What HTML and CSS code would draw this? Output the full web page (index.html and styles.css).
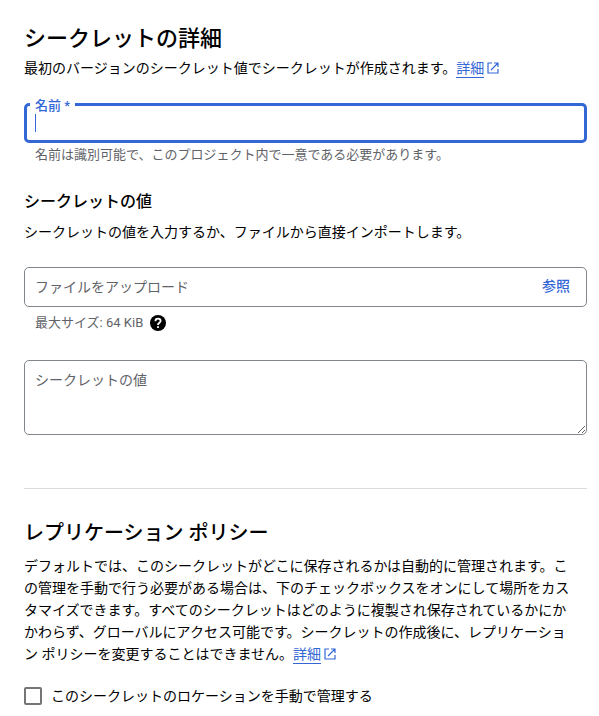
FILE: index.html
```html
<!DOCTYPE html>
<html lang="ja">
<head>
  <meta charset="UTF-8" />
  <meta name="viewport" content="width=device-width, initial-scale=1.0" />
  <title>シークレットの作成</title>
  <link rel="stylesheet" href="styles.css">
</head>
<body>
  <form class="secret-form">
    <section class="details" id="details">
      <h1>シークレットの詳細</h1>
      <p>最初のバージョンのシークレット値でシークレットが作成されます。<a href="#details" class="more"><span>詳細</span><svg viewBox="0 0 14 14" aria-hidden="true"><path d="M6 2H2v10h10V8M8 2h4v4M12 2L5 9" /></svg></a></p>

      <div class="name-field">
        <label for="name">名前 *</label>
        <input type="text" id="name" required>
        <span class="caret"></span>
      </div>
      <div class="hint">名前は識別可能で、このプロジェクト内で一意である必要があります。</div>

      <h3>シークレットの値</h3>
      <p>シークレットの値を入力するか、ファイルから直接インポートします。</p>

      <div class="upload">
        <input type="text" placeholder="ファイルをアップロード" aria-label="ファイルをアップロード" readonly>
        <button type="button">参照</button>
      </div>
      <div class="hint size-hint">
        <span>最大サイズ: 64 KiB</span>
        <svg viewBox="0 0 16 16" aria-hidden="true">
          <circle cx="8" cy="8" r="8" />
          <path d="M5.4 6.2C5.4 4.7 6.5 3.7 8 3.7S10.6 4.7 10.6 6.1C10.6 7.8 8 7.9 8 9.9" />
          <rect x="7.1" y="11.2" width="1.8" height="1.8" />
        </svg>
      </div>

      <textarea placeholder="シークレットの値" aria-label="シークレットの値"></textarea>
    </section>

    <section class="replication" id="replication">
      <h2>レプリケーション ポリシー</h2>
      <p>デフォルトでは、このシークレットがどこに保存されるかは自動的に管理されます。この管理を手動で行う必要がある場合は、下のチェックボックスをオンにして場所をカスタマイズできます。すべてのシークレットはどのように複製され保存されているかにかかわらず、グローバルにアクセス可能です。シークレットの作成後に、レプリケーション ポリシーを変更することはできません。<a href="#replication" class="more"><span>詳細</span><svg viewBox="0 0 14 14" aria-hidden="true"><path d="M6 2H2v10h10V8M8 2h4v4M12 2L5 9" /></svg></a></p>

      <div class="check">
        <input type="checkbox" id="manual">
        <label for="manual">このシークレットのロケーションを手動で管理する</label>
      </div>
    </section>
  </form>
</body>
</html>
```
FILE: styles.css
```css
* {
  box-sizing: border-box;
}
body {
  margin: 0;
  background: #fff;
  color: #000;
  font-family: Roboto, "Noto Sans CJK JP", sans-serif;
  font-size: 14px;
  line-height: 22px;
}
.secret-form {
  padding: 25px 12px 8px 24px;
}
h1, h2, h3, p {
  margin: 0;
}
h1, h2, h3 {
  font-weight: 500;
}
h1 {
  font-size: 22px;
  line-height: 28px;
  margin-bottom: 4px;
}
h2 {
  font-size: 20px;
  line-height: 28px;
  margin-bottom: 8px;
}
h3 {
  font-size: 16px;
  line-height: 24px;
  margin: 25px 0 7px;
}
input, textarea, button {
  font: inherit;
}
.more {
  color: #3367d6;
  text-decoration: none;
  white-space: nowrap;
}
.more span {
  padding-bottom: 1px;
  border-bottom: 1px solid #3367d6;
}
.more svg {
  width: 14px;
  height: 14px;
  margin-left: 2px;
  vertical-align: -2px;
  fill: none;
  stroke: #3367d6;
  stroke-width: 1.2;
}
.name-field {
  position: relative;
  margin-top: 24px;
}
.name-field label {
  position: absolute;
  top: -7px;
  left: 6px;
  padding: 0 5px;
  background: #fff;
  color: #3367d6;
  font-size: 13px;
  font-weight: 500;
  line-height: 20px;
}
.name-field input {
  display: block;
  width: 100%;
  height: 40px;
  padding: 0 8px;
  border: 3px solid #3367d6;
  border-radius: 5px;
  outline: none;
}
.caret {
  position: absolute;
  top: 11px;
  left: 11px;
  width: 1px;
  height: 18px;
  background: #3367d6;
}
.hint {
  margin: 2px 11px 0;
  color: #5f6368;
  font-size: 13px;
  line-height: 20px;
}
.upload {
  display: flex;
  align-items: center;
  height: 40px;
  margin-top: 24px;
  padding: 0 8px 0 10px;
  border: 1px solid #80868b;
  border-radius: 5px;
}
.upload input {
  flex: 1;
  min-width: 0;
  padding: 0;
  border: none;
  outline: none;
  background: none;
}
.upload button {
  padding: 0 8px 2px;
  border: none;
  background: none;
  color: #3367d6;
  font-weight: 500;
  cursor: pointer;
}
::placeholder {
  color: #5f6368;
  opacity: 1;
}
.size-hint {
  display: flex;
  align-items: center;
  gap: 7px;
  margin-top: 6px;
}
.size-hint svg {
  width: 16px;
  height: 16px;
  fill: #000;
}
.size-hint path {
  fill: none;
  stroke: #fff;
  stroke-width: 1.8;
}
.size-hint rect {
  fill: #fff;
}
textarea {
  display: block;
  width: 100%;
  height: 75px;
  margin-top: 27px;
  padding: 8px 10px;
  border: 1px solid #80868b;
  border-radius: 5px;
  outline: none;
  resize: vertical;
}
.replication {
  margin-top: 53px;
  padding-top: 30px;
  border-top: 1px solid #dadce0;
}
.replication p {
  padding-right: 8px;
}
.check {
  display: flex;
  align-items: center;
  gap: 9px;
  margin-top: 20px;
}
.check input {
  appearance: none;
  width: 18px;
  height: 18px;
  margin: 0;
  border: 2px solid #757575;
  border-radius: 2px;
}
.check input:checked {
  border-color: #3367d6;
  background: #3367d6;
}
```
